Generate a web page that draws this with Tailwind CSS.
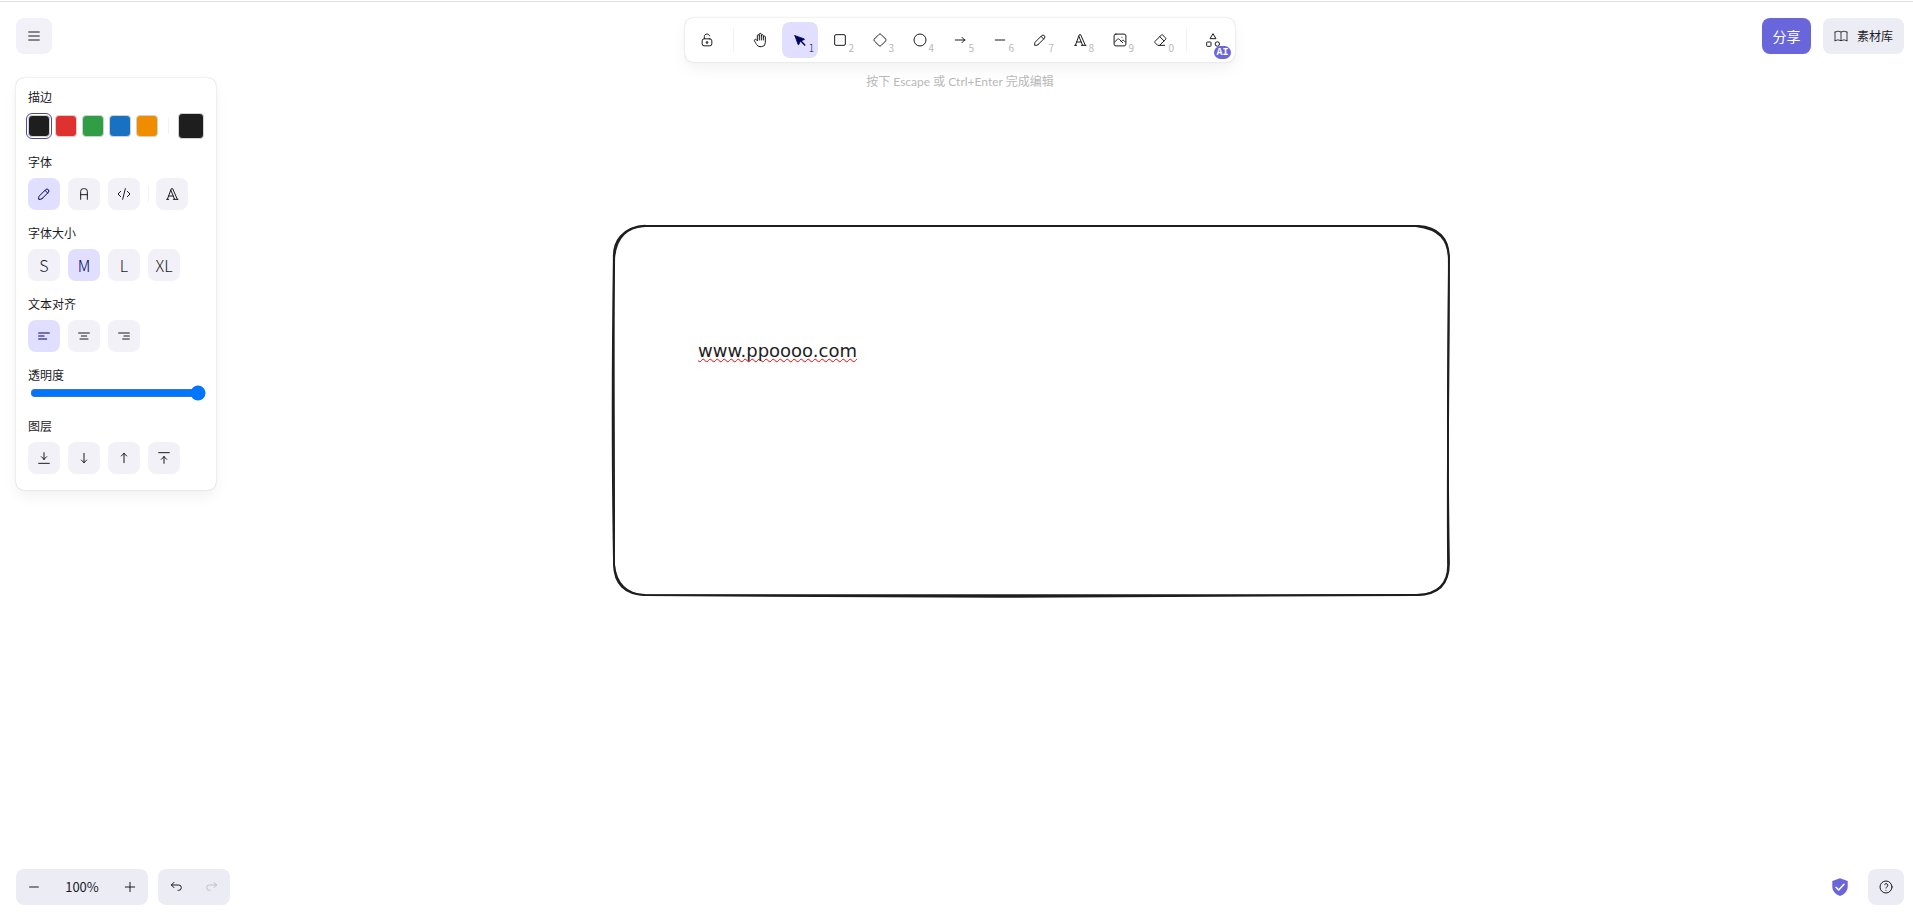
<!DOCTYPE html>
<html lang="zh-CN">
<head>
<meta charset="utf-8">
<title>Excalidraw</title>
<script src="https://cdn.jsdelivr.net/npm/@tailwindcss/browser@4"></script>
</head>
<body class="bg-white text-[#1b1b1f] font-['Noto_Sans_CJK_SC',sans-serif] text-xs">
<div class="relative flex min-h-screen flex-col justify-between overflow-hidden pr-[9px] pb-4 pl-4">
  <div class="absolute inset-x-0 top-px h-px bg-[#dee1e3]"></div>

  <!-- Drawing canvas -->
  <main class="absolute inset-0 top-0.5">
    <svg class="absolute top-[218px] left-[608px] h-[386px] w-[848px]" viewBox="608 220 848 386" fill="none" stroke="#1e1e1e" stroke-width="1.8" stroke-linecap="round" aria-hidden="true">
      <path d="M645 226 C900 225.800 1160 226.200 1418 226 C1438 227 1449 238 1449 258 C1448 340 1447.500 480 1449 563 C1449 584 1438 595 1417 595 C1150 595.500 900 595.500 645 595 C625 594.500 614 584 614 564 C614.500 460 613 350 614.200 258 C616 238 626 227 645 226"/>
      <path d="M645 226 C900 226.200 1160 225.800 1416 226 C1440 229 1448 240 1448.800 258 C1449.500 340 1447 440 1448 563 C1449 585 1437 594 1417 595 C1200 597.400 880 597.400 645 595.200 C626 594 616 584 614 564 C612 460 612.500 350 613.800 258 C613 242 622 227 645 225.600"/>
    </svg>
    <textarea aria-label="文本" rows="1" spellcheck="false" class="absolute top-[336px] left-[698px] h-[27px] w-[172px] resize-none overflow-hidden bg-transparent font-['DejaVu_Sans',sans-serif] text-[18px] leading-[25px] whitespace-nowrap text-[#1e1e1e] underline decoration-[#ff0000] decoration-wavy decoration-1 underline-offset-1 outline-none [text-decoration-skip-ink:none]">www.ppoooo.com</textarea>
  </main>

  <div class="relative grid grid-cols-[1fr_auto_1fr] items-start pt-[18px]">
    <div class="flex flex-col items-start gap-6">
      <button aria-label="菜单" class="grid size-9 place-items-center rounded-lg border border-[#f1f0ff] bg-[#f2f1f7]">
        <svg class="size-4" viewBox="0 0 24 24" fill="none" stroke="currentColor" stroke-width="1.5" stroke-linecap="round"><path d="M4 6h16M4 12h16M4 18h16"/></svg>
      </button>

      <!-- Properties panel -->
      <section class="flex w-[200px] flex-col gap-3.5 rounded-lg bg-white px-3 pt-2.5 pb-4 shadow-[0_0_1px_rgba(0,0,0,0.25),0_0_3px_rgba(0,0,0,0.06),0_7px_14px_rgba(0,0,0,0.05)]">
        <div>
          <h3 class="mb-[7px] leading-[18px]">描边</h3>
          <div class="flex h-[26px] items-center gap-[5px]">
            <button aria-label="黑色" class="size-[22px] rounded border border-[#d2d2d2] bg-[#1e1e1e] outline-1 outline-offset-1 outline-[#4a47b1]"></button>
            <button aria-label="红色" class="size-[22px] rounded border border-[#d2d2d2] bg-[#e03131]"></button>
            <button aria-label="绿色" class="size-[22px] rounded border border-[#d2d2d2] bg-[#2f9e44]"></button>
            <button aria-label="蓝色" class="size-[22px] rounded border border-[#d2d2d2] bg-[#1971c2]"></button>
            <button aria-label="橙色" class="size-[22px] rounded border border-[#d2d2d2] bg-[#f08c00]"></button>
            <span class="ml-[5px] h-4 w-px bg-[#f1f0ff]"></span>
            <button aria-label="当前颜色" class="-mr-1 ml-1 size-[26px] rounded border border-[#d2d2d2] bg-[#1e1e1e]"></button>
          </div>
        </div>
        <div>
          <h3 class="mb-[7px] leading-[18px]">字体</h3>
          <div class="flex items-center gap-2">
            <button aria-label="手写" class="grid size-8 place-items-center rounded-lg bg-[#e0dfff] text-[#030064]"><svg class="size-4" viewBox="0 0 20 20" fill="none" stroke="currentColor" stroke-width="1.25" stroke-linecap="round" stroke-linejoin="round"><path d="m7.643 15.690 7.774-7.773a2.357 2.357 0 1 0-3.334-3.334L4.310 12.357a3.333 3.333 0 0 0-.977 2.357v1.953h1.953c.884 0 1.732-.352 2.357-.977ZM11.250 5.417l3.333 3.333"/></svg></button>
            <button aria-label="普通" class="grid size-8 place-items-center rounded-lg bg-[#f2f1f7]"><svg class="size-4" viewBox="0 0 20 20" fill="none" stroke="currentColor" stroke-width="1.25" stroke-linecap="round" stroke-linejoin="round"><path d="M5.833 16.667v-10a3.333 3.333 0 0 1 3.334-3.334h1.666a3.333 3.333 0 0 1 3.334 3.334v10M5.833 10.833h8.334"/></svg></button>
            <button aria-label="代码" class="grid size-8 place-items-center rounded-lg bg-[#f2f1f7]"><svg class="size-4" viewBox="0 0 20 20" fill="none" stroke="currentColor" stroke-width="1.25" stroke-linecap="round" stroke-linejoin="round"><path d="M5.833 6.667 2.500 10l3.333 3.333M14.167 6.667 17.500 10l-3.333 3.333M11.667 3.333 8.333 16.667"/></svg></button>
            <span class="h-4 w-px bg-[#f1f0ff]"></span>
            <button aria-label="更多字体" class="-ml-px grid size-8 place-items-center rounded-lg bg-[#f2f1f7]"><svg class="size-4" viewBox="0 0 24 24" fill="none" stroke="currentColor" stroke-width="1.5" stroke-linecap="round" stroke-linejoin="round"><path d="M4 20h3M14 20h7M6.900 15h6.900M10.200 6.300 16 20M5 20l6-16h2l7 16"/></svg></button>
          </div>
        </div>
        <div>
          <h3 class="mb-[7px] leading-[18px]">字体大小</h3>
          <div class="flex gap-2">
            <button class="size-8 rounded-lg bg-[#f2f1f7] text-base leading-8 font-light">S</button>
            <button class="size-8 rounded-lg bg-[#e0dfff] text-base leading-8 font-light text-[#030064]">M</button>
            <button class="size-8 rounded-lg bg-[#f2f1f7] text-base leading-8 font-light">L</button>
            <button class="size-8 rounded-lg bg-[#f2f1f7] text-base leading-8 font-light">XL</button>
          </div>
        </div>
        <div>
          <h3 class="mb-[7px] leading-[18px]">文本对齐</h3>
          <div class="flex gap-2">
            <button aria-label="左对齐" class="grid size-8 place-items-center rounded-lg bg-[#e0dfff] text-[#030064]"><svg class="size-4" viewBox="0 0 24 24" fill="none" stroke="currentColor" stroke-width="1.75" stroke-linecap="round"><path d="M4 7.500h16M4 12h8M4 16.500h12"/></svg></button>
            <button aria-label="居中" class="grid size-8 place-items-center rounded-lg bg-[#f2f1f7]"><svg class="size-4" viewBox="0 0 24 24" fill="none" stroke="currentColor" stroke-width="1.75" stroke-linecap="round"><path d="M4 7.500h16M8 12h8M6 16.500h12"/></svg></button>
            <button aria-label="右对齐" class="grid size-8 place-items-center rounded-lg bg-[#f2f1f7]"><svg class="size-4" viewBox="0 0 24 24" fill="none" stroke="currentColor" stroke-width="1.75" stroke-linecap="round"><path d="M4 7.500h16M12 12h8M10 16.500h10"/></svg></button>
          </div>
        </div>
        <div>
          <label for="opacity" class="block leading-[18px]">透明度</label>
          <div class="-mr-0.5 mb-0.5 ml-0.5 flex h-[17px] items-center"><input id="opacity" type="range" min="0" max="100" value="100" class="w-full"></div>
        </div>
        <div>
          <h3 class="mb-[7px] leading-[18px]">图层</h3>
          <div class="flex gap-2">
            <button aria-label="置于底层" class="grid size-8 place-items-center rounded-lg bg-[#f2f1f7]"><svg class="size-4" viewBox="0 0 24 24" fill="none" stroke="currentColor" stroke-width="1.5" stroke-linecap="round" stroke-linejoin="round"><path d="M4 20h16M12 14V4M12 14l4-4M12 14l-4-4"/></svg></button>
            <button aria-label="下移一层" class="grid size-8 place-items-center rounded-lg bg-[#f2f1f7]"><svg class="size-4" viewBox="0 0 24 24" fill="none" stroke="currentColor" stroke-width="1.5" stroke-linecap="round" stroke-linejoin="round"><path d="M12 5v14M16 15l-4 4M8 15l4 4"/></svg></button>
            <button aria-label="上移一层" class="grid size-8 place-items-center rounded-lg bg-[#f2f1f7]"><svg class="size-4" viewBox="0 0 24 24" fill="none" stroke="currentColor" stroke-width="1.5" stroke-linecap="round" stroke-linejoin="round"><path d="M12 5v14M16 9l-4-4M8 9l4-4"/></svg></button>
            <button aria-label="置于顶层" class="grid size-8 place-items-center rounded-lg bg-[#f2f1f7]"><svg class="size-4" viewBox="0 0 24 24" fill="none" stroke="currentColor" stroke-width="1.5" stroke-linecap="round" stroke-linejoin="round"><path d="M4 4h16M12 10v10M12 10l4 4M12 10l-4 4"/></svg></button>
          </div>
        </div>
      </section>
    </div>

    <!-- Tools -->
    <div class="flex flex-col items-center">
      <div class="flex items-center gap-1 rounded-lg bg-white p-1 shadow-[0_0_1px_rgba(0,0,0,0.25),0_0_3px_rgba(0,0,0,0.06),0_7px_14px_rgba(0,0,0,0.05)]">
        <button aria-label="锁定" class="grid size-9 place-items-center rounded-lg"><svg class="size-4" viewBox="0 0 20 20" fill="none" stroke="currentColor" stroke-width="1.25" stroke-linecap="round" stroke-linejoin="round"><path d="M13.542 8.542H6.458a2.500 2.500 0 0 0-2.500 2.500v3.750a2.500 2.500 0 0 0 2.500 2.500h7.084a2.500 2.500 0 0 0 2.500-2.500v-3.750a2.500 2.500 0 0 0-2.500-2.500ZM10 13.958a1.042 1.042 0 1 0 0-2.083 1.042 1.042 0 0 0 0 2.083ZM6.667 8.333V5.417C6.667 3.806 8.159 2.500 10 2.500c1.500 0 2.900.9 3.200 2.300"/></svg></button>
        <span class="mx-1 h-6 w-px bg-[#f1f0ff]"></span>
        <button aria-label="抓手" class="grid size-9 place-items-center rounded-lg"><svg class="size-4" viewBox="0 0 24 24" fill="none" stroke="currentColor" stroke-width="1.5" stroke-linecap="round" stroke-linejoin="round"><path d="M8 13V5.500a1.500 1.500 0 0 1 3 0V12M11 5.500v-2a1.500 1.500 0 1 1 3 0V12M14 5.500a1.500 1.500 0 0 1 3 0V12M17 7.500a1.500 1.500 0 0 1 3 0V16a6 6 0 0 1-6 6h-2h.208a6 6 0 0 1-5.012-2.700L7 19c-.312-.479-1.407-2.388-3.286-5.728a1.500 1.500 0 0 1 .536-2.022a1.867 1.867 0 0 1 2.280.28L8 13"/></svg></button>
        <button aria-label="选择" class="relative grid size-9 place-items-center rounded-lg bg-[#e0dfff] text-[#030064]"><svg class="size-4" viewBox="0 0 22 22" fill="currentColor" stroke="currentColor" stroke-width="1.25" stroke-linecap="round" stroke-linejoin="round"><path d="M4 5l4.500 12.300a.4.4 0 0 0 .7 0l2.400-4.800 5.300-2.200a.4.400 0 0 0 0-.7L4 5z"/><path stroke-width="2" d="M12 12l5.500 6"/></svg><span class="absolute right-1 bottom-[5px] text-[10px] leading-[10px] font-light">1</span></button>
        <button aria-label="矩形" class="relative grid size-9 place-items-center rounded-lg"><svg class="size-4" viewBox="0 0 24 24" fill="none" stroke="currentColor" stroke-width="1.5"><rect x="4" y="4" width="16" height="16" rx="2"/></svg><span class="absolute right-1 bottom-[5px] text-[10px] leading-[10px] text-[#b8b8b8]">2</span></button>
        <button aria-label="菱形" class="relative grid size-9 place-items-center rounded-lg"><svg class="size-4" viewBox="0 0 24 24" fill="none" stroke="currentColor" stroke-width="1.5"><path d="M10.500 20.400l-6.900-6.900c-.781-.781-.781-2.219 0-3l6.900-6.900c.781-.781 2.219-.781 3 0l6.900 6.900c.781.781.781 2.219 0 3l-6.900 6.900c-.781.781-2.219.781-3 0z"/></svg><span class="absolute right-1 bottom-[5px] text-[10px] leading-[10px] text-[#b8b8b8]">3</span></button>
        <button aria-label="椭圆" class="relative grid size-9 place-items-center rounded-lg"><svg class="size-4" viewBox="0 0 24 24" fill="none" stroke="currentColor" stroke-width="1.5"><circle cx="12" cy="12" r="9"/></svg><span class="absolute right-1 bottom-[5px] text-[10px] leading-[10px] text-[#b8b8b8]">4</span></button>
        <button aria-label="箭头" class="relative grid size-9 place-items-center rounded-lg"><svg class="size-4" viewBox="0 0 24 24" fill="none" stroke="currentColor" stroke-width="1.5" stroke-linecap="round" stroke-linejoin="round"><path d="M5 12h14M15 16l4-4M15 8l4 4"/></svg><span class="absolute right-1 bottom-[5px] text-[10px] leading-[10px] text-[#b8b8b8]">5</span></button>
        <button aria-label="线条" class="relative grid size-9 place-items-center rounded-lg"><svg class="size-4" viewBox="0 0 20 20" fill="none" stroke="currentColor" stroke-width="1.5" stroke-linecap="round"><path d="M4.167 10h11.666"/></svg><span class="absolute right-1 bottom-[5px] text-[10px] leading-[10px] text-[#b8b8b8]">6</span></button>
        <button aria-label="画笔" class="relative grid size-9 place-items-center rounded-lg"><svg class="size-4" viewBox="0 0 20 20" fill="none" stroke="currentColor" stroke-width="1.25" stroke-linecap="round" stroke-linejoin="round"><path d="m7.643 15.690 7.774-7.773a2.357 2.357 0 1 0-3.334-3.334L4.310 12.357a3.333 3.333 0 0 0-.977 2.357v1.953h1.953c.884 0 1.732-.352 2.357-.977ZM11.250 5.417l3.333 3.333"/></svg><span class="absolute right-1 bottom-[5px] text-[10px] leading-[10px] text-[#b8b8b8]">7</span></button>
        <button aria-label="文字" class="relative grid size-9 place-items-center rounded-lg"><svg class="size-4" viewBox="0 0 24 24" fill="none" stroke="currentColor" stroke-width="1.5" stroke-linecap="round" stroke-linejoin="round"><path d="M4 20h3M14 20h7M6.900 15h6.900M10.200 6.300 16 20M5 20l6-16h2l7 16"/></svg><span class="absolute right-1 bottom-[5px] text-[10px] leading-[10px] text-[#b8b8b8]">8</span></button>
        <button aria-label="插入图像" class="relative grid size-9 place-items-center rounded-lg"><svg class="size-4" viewBox="0 0 20 20" fill="none" stroke="currentColor" stroke-width="1.25" stroke-linecap="round" stroke-linejoin="round"><path d="M12.500 6.667h.01M4.910 2.625h10.180a2.284 2.284 0 0 1 2.285 2.284v10.182a2.284 2.284 0 0 1-2.284 2.284H4.909a2.284 2.284 0 0 1-2.284-2.284V4.909a2.284 2.284 0 0 1 2.284-2.284ZM3.333 12.500l3.334-3.333c.773-.745 1.726-.745 2.500 0l4.166 4.166M11.667 11.667l.833-.834c.774-.744 1.726-.744 2.500 0l1.667 1.667"/></svg><span class="absolute right-1 bottom-[5px] text-[10px] leading-[10px] text-[#b8b8b8]">9</span></button>
        <button aria-label="橡皮" class="relative grid size-9 place-items-center rounded-lg"><svg class="size-4" viewBox="0 0 24 24" fill="none" stroke="currentColor" stroke-width="1.5" stroke-linecap="round" stroke-linejoin="round"><path d="M19 20H8.500l-4.210-4.300a1 1 0 0 1 0-1.410l10-10a1 1 0 0 1 1.410 0l5 5a1 1 0 0 1 0 1.410L11.500 20M18 13.300 11.700 7"/></svg><span class="absolute right-1 bottom-[5px] text-[10px] leading-[10px] text-[#b8b8b8]">0</span></button>
        <span class="mx-1 h-6 w-px bg-[#f1f0ff]"></span>
        <button aria-label="更多工具" class="relative grid size-9 place-items-center rounded-lg"><svg class="size-4" viewBox="0 0 24 24" fill="none" stroke="currentColor" stroke-width="1.5" stroke-linejoin="round"><path d="M12 2.500 7.500 10h9z"/><circle cx="18.500" cy="18" r="3.300"/><rect x="2.500" y="15" width="6.500" height="6.500" rx="1"/></svg><span class="absolute right-0 -bottom-px h-[13px] w-[17px] rounded-full bg-[#6965db] text-center font-['Liberation_Mono',monospace] text-[10px] leading-[13px] font-bold text-white">AI</span></button>
      </div>
      <p class="mt-[11px] font-['Lato','Noto_Sans_CJK_SC',sans-serif] leading-[18px] text-[#b8b8b8]">按下 Escape 或 Ctrl+Enter 完成编辑</p>
    </div>

    <div class="flex justify-end gap-3">
      <button class="h-9 w-[49px] rounded-lg bg-[#6965db] text-sm text-white">分享</button>
      <button class="flex h-9 items-center gap-2 rounded-lg bg-[#ececf4] pr-[11px] pl-[10px]"><svg class="size-4" viewBox="0 0 24 24" fill="none" stroke="currentColor" stroke-width="1.25" stroke-linecap="round" stroke-linejoin="round"><path d="M3 19a9 9 0 0 1 9 0a9 9 0 0 1 9 0M3 6a9 9 0 0 1 9 0a9 9 0 0 1 9 0M3 6v13M12 6v13M21 6v13"/></svg>素材库</button>
    </div>
  </div>

  <footer class="relative flex items-center justify-between">
    <div class="flex gap-2.5">
      <div class="flex h-9 w-[132px] items-center justify-between rounded-lg bg-[#ececf4]">
        <button aria-label="缩小" class="grid size-9 place-items-center"><svg class="size-4" viewBox="0 0 20 20" fill="none" stroke="currentColor" stroke-width="1.25" stroke-linecap="round"><path d="M4.500 10h11"/></svg></button>
        <button class="text-[13px]">100%</button>
        <button aria-label="放大" class="grid size-9 place-items-center"><svg class="size-4" viewBox="0 0 20 20" fill="none" stroke="currentColor" stroke-width="1.25" stroke-linecap="round"><path d="M10 4.167v11.666M4.167 10h11.666"/></svg></button>
      </div>
      <div class="flex h-9 items-center rounded-lg bg-[#ececf4]">
        <button aria-label="撤销" class="grid size-9 place-items-center"><svg class="size-4" viewBox="0 0 20 20" fill="none" stroke="currentColor" stroke-width="1.25" stroke-linecap="round" stroke-linejoin="round"><path d="M7.500 10.833 4.167 7.500 7.500 4.167M4.167 7.500h9.166a3.333 3.333 0 0 1 0 6.667H12.500"/></svg></button>
        <button aria-label="重做" disabled class="grid size-9 place-items-center text-[#bfbfc5]"><svg class="size-4" viewBox="0 0 20 20" fill="none" stroke="currentColor" stroke-width="1.25" stroke-linecap="round" stroke-linejoin="round"><path d="M12.500 10.833 15.833 7.500 12.500 4.167M15.833 7.500H6.667a3.333 3.333 0 0 0 0 6.667H7.500"/></svg></button>
      </div>
    </div>
    <div class="flex items-center gap-[19px]">
      <a href="#" aria-label="端到端加密"><svg class="size-[18px]" viewBox="0 0 18 18" fill="none"><path fill="#6965db" d="M9 .3 16.700 3v5.500c0 4.500-3.200 7.800-7.700 9.400C4.500 16.300 1.300 13 1.300 8.500V3z"/><path stroke="#fff" stroke-width="1.600" stroke-linecap="round" stroke-linejoin="round" d="m5 9.300 2.700 2.700L13 6.300"/></svg></a>
      <button aria-label="帮助" class="grid size-9 place-items-center rounded-lg bg-[#ececf4]"><svg class="size-4" viewBox="0 0 24 24" fill="none" stroke="currentColor" stroke-width="1.5" stroke-linecap="round" stroke-linejoin="round"><circle cx="12" cy="12" r="9"/><path d="M12 17v.01M12 13.500a1.500 1.500 0 0 1 1-1.500a2.600 2.600 0 1 0-3-4"/></svg></button>
    </div>
  </footer>
</div>
</body>
</html>
